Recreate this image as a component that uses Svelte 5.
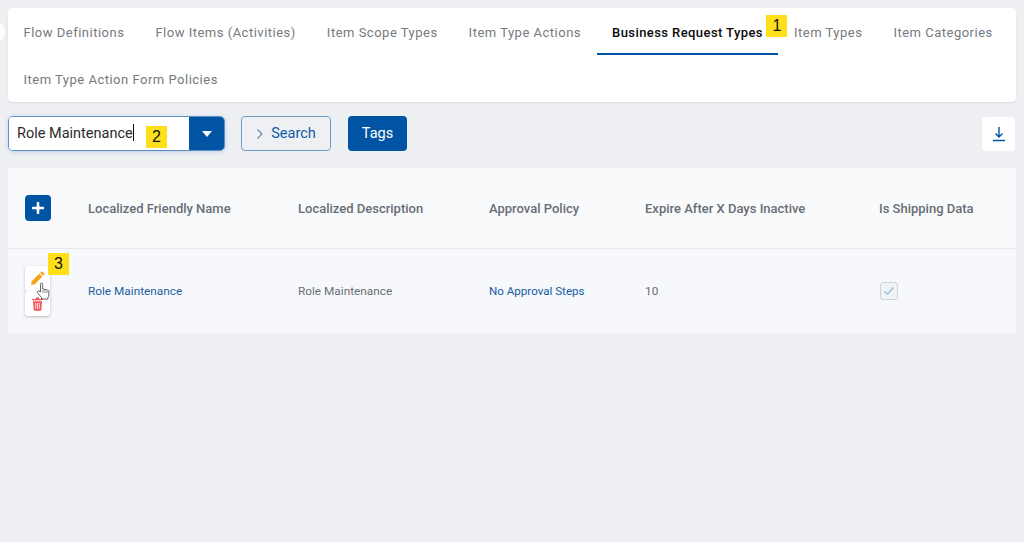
<script>
	const tabs = [
		'Flow Definitions',
		'Flow Items (Activities)',
		'Item Scope Types',
		'Item Type Actions',
		'Business Request Types',
		'Item Types',
		'Item Categories',
		'Item Type Action Form Policies'
	];
	const activeTab = 'Business Request Types';
	const columns = [
		'Localized Friendly Name',
		'Localized Description',
		'Approval Policy',
		'Expire After X Days Inactive',
		'Is Shipping Data'
	];
</script>

<div class="page">
	<span class="collapse"></span>

	<nav class="tabs">
		{#each tabs as tab}
			<div class="tab" class:active={tab === activeTab}>
				{tab}
				{#if tab === activeTab}<span class="note note-tab">1</span>{/if}
			</div>
		{/each}
	</nav>

	<div class="toolbar">
		<div class="combo">
			<div class="combo-input">
				Role Maintenance<span class="caret"></span>
				<span class="note note-combo">2</span>
			</div>
			<div class="combo-btn">
				<svg width="12" height="8" viewBox="0 0 12 8"><path d="M1 1h10L6 7z" fill="#fff" /></svg>
			</div>
		</div>
		<button class="search">
			<svg width="8" height="12" viewBox="0 0 8 12"><path d="M1.500 1.500 6 6l-4.500 4.500" fill="none" stroke="#5b87b5" stroke-width="1.100" /></svg>
			Search
		</button>
		<button class="tags">Tags</button>
		<button class="download">
			<svg width="14" height="16" viewBox="0 0 14 16">
				<path d="M7 1v10M3.500 7.500 7 11l3.500-3.500M1 14.500h12" fill="none" stroke="#0054a3" stroke-width="1.400" />
			</svg>
		</button>
	</div>

	<div class="table">
		<div class="row head">
			<div class="cell-actions">
				<span class="add">
					<svg width="12" height="12" viewBox="0 0 12 12"><path d="M6 1v10M1 6h10" stroke="#fff" stroke-width="2.600" stroke-linecap="round" /></svg>
				</span>
			</div>
			{#each columns as col}
				<div class="col">{col}</div>
			{/each}
		</div>
		<div class="row body">
			<div class="cell-actions">
				<div class="stack">
					<span class="act">
						<svg width="15" height="15" viewBox="0 0 15 15">
							<path d="M1 14l.8-3.800 7.600-7.600 3 3-7.600 7.600z" fill="#f5a11c" />
							<path d="M10.200 1.800l1-1a1 1 0 0 1 1.400 0l1.600 1.600a1 1 0 0 1 0 1.400l-1 1z" fill="#f5a11c" />
						</svg>
					</span>
					<span class="act">
						<svg width="13" height="15" viewBox="0 0 13 15">
							<path d="M1 3h11v1.300H1zM4.500 3l.6-1.600h2.800L8.500 3z" fill="#f4545a" />
							<path d="M2 5.300h9l-.7 8.700a1 1 0 0 1-1 .8H3.700a1 1 0 0 1-1-.8z" fill="#f4545a" />
							<path d="M4.700 7v5.800M6.500 7v5.800M8.300 7v5.800" stroke="#fff" stroke-width=".8" />
						</svg>
					</span>
					<svg class="hand" width="14" height="18" viewBox="0 0 14 18">
						<path d="M4.500 10V2.200a1.100 1.100 0 0 1 2.200 0V7l4.300.9c1 .2 1.800.9 1.800 2v3c0 1-.3 1.800-.8 2.600v1.500H5.500v-1.500L1.600 11c-.8-1-.1-2.200 1-2z" fill="#fff" stroke="#555" stroke-width=".9" stroke-linejoin="round" />
						<path d="M7 8v3M9 8.400V11M11 8.800V11" stroke="#555" stroke-width=".7" />
					</svg>
					<span class="note note-row">3</span>
				</div>
			</div>
			<div class="col link">Role Maintenance</div>
			<div class="col">Role Maintenance</div>
			<div class="col policy">No Approval Steps</div>
			<div class="col">10</div>
			<div class="col shift">
				<span class="check">
					<svg width="12" height="10" viewBox="0 0 12 10"><path d="M1.500 5.500 4.500 8l6-6.500" fill="none" stroke="#9dbfe0" stroke-width="1.600" /></svg>
				</span>
			</div>
		</div>
	</div>
</div>

<style>
	:global(body) {
		margin: 0;
		background-color: #eeeff3;
	}

	.page {
		position: relative;
		height: 542px;
		padding: 8px;
		box-sizing: border-box;
		overflow: hidden;
		font-family: 'Roboto', 'Liberation Sans', sans-serif;
		background-color: #eeeff3;
	}

	.collapse {
		position: absolute;
		left: -6px;
		top: 24px;
		width: 11px;
		height: 16px;
		border-radius: 50%;
		background-color: #fff;
	}

	.tabs {
		display: flex;
		flex-wrap: wrap;
		align-content: flex-start;
		background-color: #fff;
		border-radius: 4px;
		box-shadow: 0 1px 2px rgb(0 0 0 / 0.08);
		height: 94px;
	}

	.tab {
		position: relative;
		box-sizing: border-box;
		height: 47px;
		line-height: 49px;
		padding: 0 15.500px;
		font-size: 13px;
		letter-spacing: 0.5px;
		color: #747a80;
		white-space: nowrap;
	}

	.tab.active {
		color: #0a0a0a;
		font-weight: 500;
		letter-spacing: 0.42px;
		border-bottom: 2px solid #0054a3;
	}

	.note {
		position: absolute;
		display: flex;
		align-items: center;
		justify-content: center;
		width: 21px;
		height: 22px;
		background-color: #fde01a;
		color: #111;
		font-family: 'Liberation Sans', sans-serif;
		font-size: 16px;
		font-weight: 400;
		letter-spacing: 0;
		line-height: 1;
	}

	.note-tab {
		right: -9px;
		top: 7px;
	}

	.note-combo {
		left: 137px;
		top: 9px;
	}

	.note-row {
		left: 23px;
		top: -13px;
	}

	.toolbar {
		display: flex;
		align-items: center;
		margin-top: 14px;
		height: 35px;
	}

	.combo {
		display: flex;
		width: 217px;
		height: 35px;
		box-sizing: border-box;
		border: 1px solid #5b93c9;
		border-radius: 5px;
		overflow: hidden;
		box-shadow: 0 1px 4px rgb(0 84 163 / 0.2);
	}

	.combo-input {
		position: relative;
		flex: 1;
		background-color: #fff;
		padding-left: 8px;
		line-height: 33px;
		font-size: 14.500px;
		color: #2b2b2b;
	}

	.caret {
		display: inline-block;
		width: 1px;
		height: 17px;
		background-color: #111;
		vertical-align: -3px;
	}

	.combo-btn {
		display: flex;
		align-items: center;
		justify-content: center;
		width: 35px;
		background-color: #0054a3;
	}

	button {
		font-family: inherit;
		height: 35px;
		border-radius: 4px;
		box-sizing: border-box;
		cursor: pointer;
	}

	.search {
		display: flex;
		align-items: center;
		justify-content: center;
		gap: 7px;
		width: 90px;
		margin-left: 16px;
		background-color: #eef0f4;
		border: 1px solid #6d9cc9;
		color: #0f5ba6;
		font-size: 14.500px;
	}

	.tags {
		width: 59px;
		margin-left: 17px;
		background-color: #0054a3;
		border: none;
		color: #fff;
		font-size: 14.500px;
	}

	.download {
		display: flex;
		align-items: center;
		justify-content: center;
		width: 33px;
		height: 34px;
		margin-left: auto;
		margin-right: 1px;
		padding: 0;
		background-color: #fff;
		border: none;
	}

	.table {
		margin-top: 17px;
		font-size: 12px;
	}

	.row {
		display: grid;
		grid-template-columns: 80px 210px 191px 156px 234px 1fr;
		align-items: center;
	}

	.head {
		height: 81px;
		background-color: #f9fafc;
		border-bottom: 1px solid #e6e8ec;
		box-sizing: border-box;
		font-weight: 500;
		font-size: 13px;
		color: #686e75;
	}

	.body {
		height: 84px;
		background-color: #f7f8fb;
		color: #686e75;
		font-size: 11.800px;
	}

	.cell-actions {
		padding-left: 17px;
	}

	.add {
		display: flex;
		align-items: center;
		justify-content: center;
		width: 26px;
		height: 26px;
		border-radius: 4px;
		background-color: #0054a3;
	}

	.stack {
		position: relative;
		width: 25px;
	}

	.act {
		display: flex;
		align-items: center;
		justify-content: center;
		width: 25px;
		height: 25px;
		background-color: #fff;
		border-radius: 3px;
		box-shadow: 0 1px 3px rgb(0 0 0 / 0.25);
	}

	.hand {
		position: absolute;
		left: 11px;
		top: 16px;
	}

	.link {
		color: #1a5e9f;
	}

	.policy {
		color: #0f5ba6;
		font-size: 11.600px;
	}

	.shift {
		padding-left: 1px;
	}

	.check {
		display: flex;
		align-items: center;
		justify-content: center;
		width: 18px;
		height: 18px;
		box-sizing: border-box;
		border: 1px solid #cfd3d9;
		border-radius: 3px;
		background-color: #f1f2f5;
	}
</style>
